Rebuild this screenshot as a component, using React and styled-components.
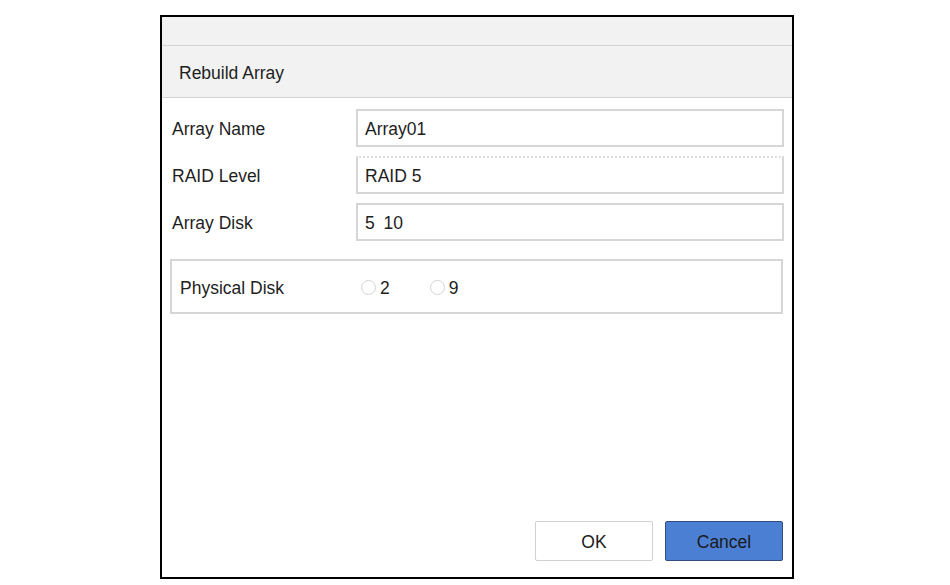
import React from "react";
import styled, { createGlobalStyle } from "styled-components";

const Global = createGlobalStyle`
  html, body { margin: 0; padding: 0; background: #fff; }
  body { font-family: "Liberation Sans", Arial, sans-serif; color: #1e1e1e; }
`;

const Page = styled.div`
  width: 950px;
  height: 585px;
  padding: 15px 0 0 160px;
  box-sizing: border-box;
`;

const Dialog = styled.div`
  width: 634px;
  height: 564px;
  border: 2px solid #000;
  box-sizing: border-box;
  display: flex;
  flex-direction: column;
  background: #fff;
`;

const TopBar = styled.div`
  height: 28px;
  background: #f2f2f2;
  border-bottom: 1px solid #d4d4d4;
`;

const Header = styled.div`
  height: 52px;
  background: #f2f2f2;
  border-bottom: 1px solid #d4d4d4;
  display: flex;
  align-items: center;
  padding: 3px 0 0 17px;
  font-size: 17.5px;
  box-sizing: border-box;
`;

const Body = styled.div`
  flex: 1;
  padding: 11px 8px 0 8px;
  display: flex;
  flex-direction: column;
  gap: 9px;
`;

const Row = styled.div`
  display: grid;
  grid-template-columns: 184px 428px;
  align-items: center;
  height: 38px;
  padding-left: 2px;
  font-size: 17.5px;
`;

const Label = styled.span`
  padding-top: 3px;
`;

const Field = styled.div`
  height: 38px;
  border: 2px solid #d6d6d6;
  border-top-style: ${(p) => (p.$dotted ? "dotted" : "solid")};
  border-top-color: ${(p) => (p.$dotted ? "#e0e0e0" : "#d6d6d6")};
  box-sizing: border-box;
  display: flex;
  align-items: center;
  padding: 3px 0 0 7px;
  font-size: 17.5px;
  word-spacing: ${(p) => (p.$wide ? "4px" : "0")};
`;

const Group = styled.div`
  margin-top: 9px;
  width: 613px;
  height: 55px;
  border: 2px solid #d6d6d6;
  box-sizing: border-box;
  display: grid;
  grid-template-columns: 181px auto;
  align-items: center;
  padding: 3px 0 0 8px;
  font-size: 17.5px;
`;

const Radios = styled.div`
  display: flex;
  align-items: center;
  gap: 40px;
`;

const RadioItem = styled.label`
  display: flex;
  align-items: center;
  gap: 4px;
  font-size: 17.5px;
`;

const Circle = styled.span`
  width: 15px;
  height: 15px;
  border: 1px solid #d4d4d4;
  border-radius: 50%;
  box-sizing: border-box;
  background: #fff;
  margin-top: -2px;
`;

const Footer = styled.div`
  display: flex;
  justify-content: flex-end;
  gap: 12px;
  padding: 0 9px 16px 0;
`;

const Button = styled.button`
  width: 118px;
  height: 40px;
  border-radius: 2px;
  font-family: "Liberation Sans", Arial, sans-serif;
  font-size: 17.5px;
  color: #1a1a1a;
  border: 1px solid ${(p) => (p.$primary ? "#2f4f7f" : "#d0d0d0")};
  background: ${(p) => (p.$primary ? "#4a7fd3" : "#fff")};
  padding: 2px 0 0;
`;

export default function App() {
  return (
    <>
      <Global />
      <Page>
        <Dialog>
          <TopBar />
          <Header>Rebuild Array</Header>
          <Body>
            <Row>
              <Label>Array Name</Label>
              <Field>Array01</Field>
            </Row>
            <Row>
              <Label>RAID Level</Label>
              <Field $dotted>RAID 5</Field>
            </Row>
            <Row>
              <Label>Array Disk</Label>
              <Field $wide>5 10</Field>
            </Row>
            <Group>
              <span>Physical Disk</span>
              <Radios>
                <RadioItem>
                  <Circle />2
                </RadioItem>
                <RadioItem>
                  <Circle />9
                </RadioItem>
              </Radios>
            </Group>
          </Body>
          <Footer>
            <Button>OK</Button>
            <Button $primary>Cancel</Button>
          </Footer>
        </Dialog>
      </Page>
    </>
  );
}
